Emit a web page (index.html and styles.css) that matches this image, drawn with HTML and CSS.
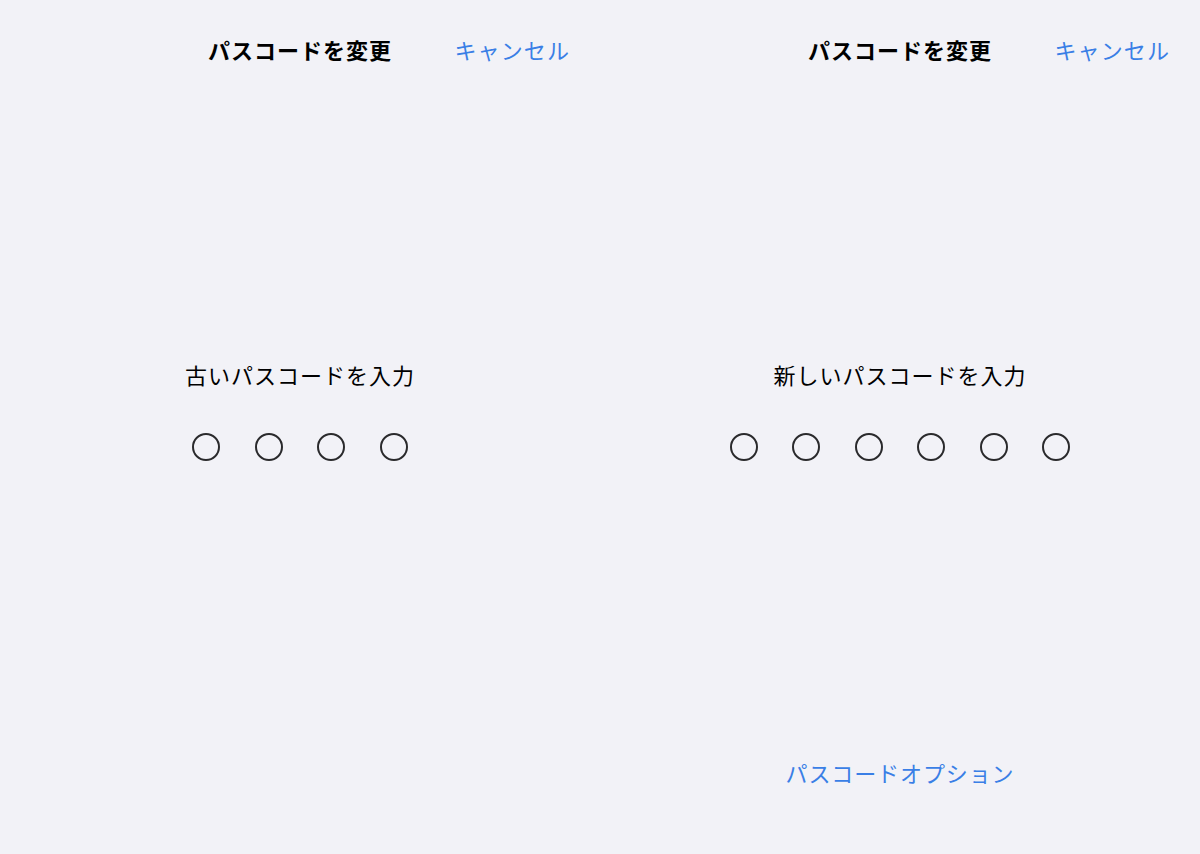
FILE: index.html
```html
<!DOCTYPE html>
<html lang="ja">
<head>
<meta charset="utf-8">
<title>パスコードを変更</title>
<link rel="stylesheet" href="styles.css">
</head>
<body>
<div class="screen">
  <section class="panel">
    <header class="nav">
      <span class="spacer"></span>
      <h1 class="title">パスコードを変更</h1>
      <a class="cancel">キャンセル</a>
    </header>
    <p class="prompt">古いパスコードを入力</p>
    <div class="dots">
      <span class="dot"></span><span class="dot"></span><span class="dot"></span><span class="dot"></span>
    </div>
  </section>
  <section class="panel">
    <header class="nav">
      <span class="spacer"></span>
      <h1 class="title">パスコードを変更</h1>
      <a class="cancel">キャンセル</a>
    </header>
    <p class="prompt">新しいパスコードを入力</p>
    <div class="dots">
      <span class="dot"></span><span class="dot"></span><span class="dot"></span><span class="dot"></span><span class="dot"></span><span class="dot"></span>
    </div>
    <a class="options">パスコードオプション</a>
  </section>
</div>
</body>
</html>
```

FILE: styles.css
```css
* { box-sizing: border-box; }
html, body {
  margin: 0;
  padding: 0;
  background: #f2f2f7;
  font-family: "Noto Sans CJK JP", "Noto Sans", sans-serif;
  color: #000;
}
.screen {
  display: flex;
  width: 1200px;
  height: 854px;
}
.panel {
  width: 600px;
  height: 854px;
  display: flex;
  flex-direction: column;
  align-items: center;
  padding-bottom: 66px;
}
.nav {
  width: 100%;
  display: grid;
  grid-template-columns: 1fr auto 1fr;
  align-items: center;
  padding: 33px 30px 0;
}
.title {
  margin: 0;
  font-size: 22px;
  font-weight: 700;
  line-height: 32px;
  letter-spacing: 1px;
}
.cancel {
  justify-self: end;
  font-size: 22px;
  line-height: 32px;
  color: #3a7fe6;
  letter-spacing: 1.1px;
}
.prompt {
  margin: 293px 0 0;
  font-size: 22px;
  line-height: 32px;
  letter-spacing: 1px;
}
.dots {
  display: flex;
  gap: 34.5px;
  margin-top: 42.5px;
}
.dot {
  width: 28px;
  height: 28px;
  border: 2px solid #2a2a2c;
  border-radius: 50%;
}
.options {
  margin-top: auto;
  font-size: 22px;
  line-height: 32px;
  color: #3a7fe6;
  letter-spacing: 0.9px;
}
```
